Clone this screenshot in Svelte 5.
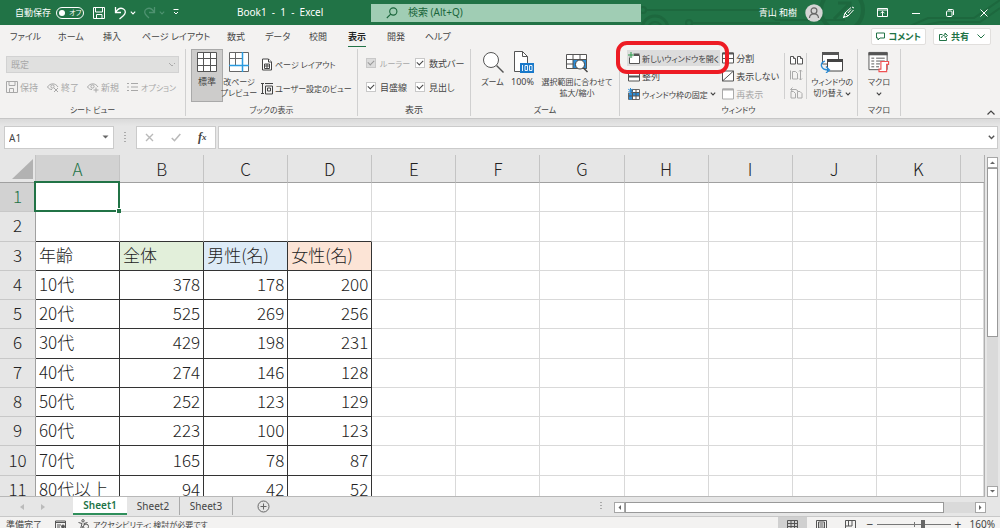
<script>
  const tabs = ['ファイル', 'ホーム', '挿入', 'ページ レイアウト', '数式', 'データ', '校閲', '表示', '開発', 'ヘルプ'];
  const columns = ['A', 'B', 'C', 'D', 'E', 'F', 'G', 'H', 'I', 'J', 'K', ''];
  const rows = [
    [], [],
    ['年齢', '全体', '男性(名)', '女性(名)'],
    ['10代', 378, 178, 200],
    ['20代', 525, 269, 256],
    ['30代', 429, 198, 231],
    ['40代', 274, 146, 128],
    ['50代', 252, 123, 129],
    ['60代', 223, 100, 123],
    ['70代', 165, 78, 87],
    ['80代以上', 94, 42, 52]
  ];
  const tints = ['', 'green', 'blue', 'orange'];
  const sheets = ['Sheet1', 'Sheet2', 'Sheet3'];
  let autosave = $state(false);
  let zoom = $state(160);
</script>

{#snippet chevron()}
  <svg class="chev" width="6" height="4" viewBox="0 0 6 4"><path d="M.8.6 3 2.9 5.2.6" fill="none" stroke="currentColor" stroke-width="1.1" /></svg>
{/snippet}

{#snippet triangle(d)}
  <svg width="9" height="9" viewBox="0 0 9 9"><path {d} fill="#666" /></svg>
{/snippet}

<div class="app">
  <header class="title">
    <svg class="circuit" width="390" height="25" viewBox="0 0 390 25" fill="none" stroke="#1d683e" stroke-width="2">
      <circle cx="33" cy="10" r="3" /><path d="M36 10H150L166 20H235" />
      <circle cx="45" cy="29" r="13" stroke-width="3" /><circle cx="45" cy="29" r="7" />
      <circle cx="79" cy="23" r="3" /><path d="M82 23H170" />
      <circle cx="232" cy="10" r="21" stroke-width="4" /><path d="M224 19 240 3M228 3h12v12" stroke-width="3" />
      <path d="M300 26 318 18H364L390 0M310 26 330 22H370L390 8" />
    </svg>
    <label class="autosave">自動保存 <input type="checkbox" role="switch" bind:checked={autosave} /><span class="toggle"><i></i>オフ</span></label>
    <div class="quick">
      <button aria-label="上書き保存"><svg width="14" height="14" viewBox="0 0 14 14" fill="none" stroke="#fff"><path d="M1.5 1.5h11v11h-11zM3.5 1.5v4.500h7v-4.500M4.500 12.500v-4h5.500v4" /></svg></button>
      <button aria-label="元に戻す"><svg width="13" height="14" viewBox="0 0 13 14" fill="none" stroke="#fff" stroke-width="1.300"><path d="M1.500 1v5.500H7M1.700 6.200C4 2.500 7 1.500 9.500 3c3 2 1.800 5-.2 6.700L5.500 13" /></svg>{@render chevron()}</button>
      <button class="dim" aria-label="やり直し"><svg width="13" height="14" viewBox="0 0 13 14" fill="none" stroke="currentColor" stroke-width="1.300"><path d="M11.500 1v5.500H6M11.300 6.200C9 2.500 6 1.500 3.500 3c-3 2-1.800 5 .2 6.700L6 12" /></svg>{@render chevron()}</button>
      <button aria-label="クイック アクセス"><svg width="6" height="7" viewBox="0 0 6 7" fill="none" stroke="#fff"><path d="M.5.5h5M1 3l2 2 2-2" /></svg></button>
    </div>
    <h1>Book1&nbsp; -&nbsp; 1&nbsp; -&nbsp; Excel</h1>
    <label class="search">
      <svg width="12" height="12" viewBox="0 0 12 12" fill="none" stroke="#19653b" stroke-width="1.100"><circle cx="7.300" cy="4.500" r="3.600" /><path d="M4.700 7.200.8 11" /></svg>
      <input aria-label="検索" placeholder="検索 (Alt+Q)" />
    </label>
    <div class="account">
      <span>青山 和樹</span>
      <svg width="18" height="18" viewBox="0 0 18 18"><circle cx="9" cy="9" r="8.700" fill="#d5d5d5" /><g fill="none" stroke="#666" stroke-width="1.200"><circle cx="9" cy="6.700" r="2.900" /><path d="M4.500 14c.2-5.500 8.800-5.500 9 0" /></g></svg>
    </div>
    <div class="window">
      <button aria-label="ペン"><svg width="13" height="13" viewBox="0 0 13 13" fill="none" stroke="#fff"><path d="M9 1.500 3 7l-1.500 4.500L6 10l5.500-6M3 7l3 3M9 3.500 6 7M1 12l2-2M10 1l2 1" /></svg></button>
      <button aria-label="リボンの表示オプション"><svg width="11" height="9" viewBox="0 0 11 9" fill="none" stroke="#fff"><path d="M.5.5h10v8H.5zM.5 2h10M5.500 8V3.500M3.500 5.300l2-2 2 2" /></svg></button>
      <button aria-label="最小化"><svg width="8" height="8" viewBox="0 0 8 8"><path d="M0 4.500h8" stroke="#fff" /></svg></button>
      <button aria-label="元のサイズに戻す"><svg width="8" height="8" viewBox="0 0 8 8" fill="none" stroke="#fff"><rect x=".5" y="2" width="5.500" height="5.500" rx="1" /><path d="M2 .5h4.500q1 0 1 1V6" /></svg></button>
      <button aria-label="閉じる"><svg width="8" height="8" viewBox="0 0 8 8"><path d="m.5.5 7 7M7.500.5l-7 7" stroke="#fff" /></svg></button>
    </div>
  </header>

  <nav class="menu">
    {#each tabs as tab}
      <button class:active={tab === '表示'}><span>{tab}</span></button>
    {/each}
    <div class="share">
      <button><svg width="9" height="9" viewBox="0 0 9 9" fill="none" stroke="#217346"><path d="M.5 1h8v5H4L2 8V6H.5z" /></svg>コメント</button>
      <button><svg width="9" height="9" viewBox="0 0 9 9" fill="none" stroke="#217346"><path d="M3.500 2.500h-3v6h7V6M2.500 6c.3-2 2-3 3.500-3V1l2.500 2.500L6 5.500V4" /></svg>共有 <svg class="wide" width="8" height="5" viewBox="0 0 8 5" fill="none" stroke="#217346"><path d="m.5.500 3.500 3.500 3.500-3.500" /></svg></button>
    </div>
  </nav>

  <section class="ribbon">
    <div class="group sheetview">
      <div class="body">
        <select aria-label="シート ビュー" disabled><option>既定</option></select>
        <div class="line">
          <button disabled><svg width="12" height="12" viewBox="0 0 12 12" fill="none" stroke="currentColor"><path d="M.5.500h11v11H.5zM3 .5v4h6v-4M3.500 11V7.500h4V11" /></svg>保持</button>
          <button disabled><svg width="12" height="11" viewBox="0 0 12 11" fill="none" stroke="currentColor"><path d="M.5 5C3 .8 8.500.8 11 5M.5 5c1 1.500 2.500 2.500 4.500 2.500" /><circle cx="5.500" cy="4.500" r="1.600" /><path d="m7 6 4 4M11 6l-4 4" /></svg>終了</button>
          <button disabled><svg width="12" height="11" viewBox="0 0 12 11" fill="none" stroke="currentColor"><path d="M.5 5C3 .8 8.500.8 11 5M.5 5c1 1.500 2.500 2.500 4.500 2.500" /><circle cx="5.500" cy="4.500" r="1.600" /><path d="M9 5.500v5M6.500 8h5" /></svg>新規</button>
          <button disabled><svg width="12" height="10" viewBox="0 0 12 10" fill="none" stroke="currentColor"><path d="M0 1.500h2M0 5h2M0 8.500h2M4 1.500h7M4 5h7M4 8.500h7" /></svg><span class="kana">オプション</span></button>
        </div>
      </div>
      <h2 class="kana">シート ビュー</h2>
    </div>

    <div class="group book">
      <div class="body">
        <button class="big pressed"><svg width="22" height="22" viewBox="0 0 22 22"><path d="M1.500 1.500h19v19h-19z" fill="#fff" /><path d="M1.500 1.500h19v19h-19zM7.500 1.500v19M14.500 1.500v19M1.500 7.500h19M1.500 14.500h19" fill="none" stroke="#555" /></svg><span>標準</span></button>
        <button class="big"><svg width="22" height="22" viewBox="0 0 22 22"><path d="M1.500 1.500h19v19h-19z" fill="#fff" /><path d="M7.500 1v13M1 7.500h13" stroke="#666" /><path d="M1.500 1.500h19v19h-19z" fill="none" stroke="#666" /><path d="M14.500 1v20M1 14.500h20" stroke="#2a9be0" stroke-width="1.500" /></svg><span class="kana">改ページ<br />プレビュー</span></button>
        <div class="stack two">
          <button><svg width="12" height="13" viewBox="0 0 12 13" fill="#fff" stroke="#444"><path d="M1.500 1h6l3 3v8h-9z" /><path d="M7.500 1v3h3M3.500 6h5v4.500h-5zM6 6v4.500M3.500 8h5" /></svg><span class="kana">ページ レイアウト</span></button>
          <button><svg width="12" height="13" viewBox="0 0 12 13" fill="none" stroke="#444"><path d="M0 1.500h3M0 11.500h3M1.500 1.500v10M4.500 4h7v8h-7zM4 1.500h8M6.500 6h3v3h-3z" /></svg><span class="kana">ユーザー設定のビュー</span></button>
        </div>
      </div>
      <h2 class="kana">ブックの表示</h2>
    </div>

    <div class="group show">
      <div class="body checks">
        <label class="off"><input type="checkbox" checked disabled /><span class="kana">ルーラー</span></label>
        <label><input type="checkbox" checked />数式バー</label>
        <label><input type="checkbox" checked />目盛線</label>
        <label><input type="checkbox" checked />見出し</label>
      </div>
      <h2>表示</h2>
    </div>

    <div class="group zoom">
      <div class="body">
        <button class="big"><svg width="22" height="22" viewBox="0 0 22 22"><circle cx="9" cy="9" r="7.500" fill="#fff" stroke="#555" /><path d="m14.500 14.500 7 7" stroke="#555" stroke-width="1.400" /></svg><span class="kana">ズーム</span></button>
        <button class="big"><svg width="22" height="22" viewBox="0 0 22 22"><path d="M2.500.500h8l5 5v15h-13z" fill="#fff" stroke="#555" /><path d="M10.500.500v5h5" fill="none" stroke="#555" /><path d="M8 12h14v10H8z" fill="#1979ca" /><path d="M10.500 14v6M13 14.500h2.500v5H13zM17.500 14.500H20v5h-2.500z" fill="none" stroke="#fff" stroke-width=".9" /></svg><span>100%</span></button>
        <button class="big"><svg width="24" height="22" viewBox="0 0 24 22"><path d="M1.500 3.500h20v14h-20z" fill="#fff" /><path d="M8 9h14v9H8z" fill="#2a8dd8" /><path d="M1.500 3.500h20v14h-20zM8 3.500v14M15 3.500v5M1.500 8.500h20M1.500 13h7" fill="none" stroke="#555" /><circle cx="15" cy="13.500" r="4.500" fill="#fff" stroke="#444" /><path d="m18.500 17 4 4" stroke="#444" stroke-width="1.400" /></svg><span class="kana">選択範囲に合わせて<br />拡大/縮小</span></button>
      </div>
      <h2 class="kana">ズーム</h2>
    </div>

    <div class="group win">
      <div class="body">
        <div class="stack">
          <div class="marked">
            <button class="hot"><svg width="12" height="12" viewBox="0 0 12 12"><path d="M1.500 3.500h10v8h-10z" fill="#fff" stroke="#555" /><path d="M5 2.500h6.500" stroke="#555" stroke-width="2" /><path d="M3 0v6M0 3h6" stroke="#dcdcdc" stroke-width="3" /><path d="M3 0v6M0 3h6" stroke="#2a9a4a" /></svg><span class="kana">新しいウィンドウを開く</span></button>
            <i class="ring"></i>
          </div>
          <button><svg width="12" height="12" viewBox="0 0 12 12" fill="#fff" stroke="#555"><path d="M.5 1h11v10H.5z" /><path d="M.5 1.500h11M.5 6.500h11" stroke-width="2" /></svg>整列</button>
          <button><svg width="12" height="12" viewBox="0 0 12 12"><path d="M3.500 1.500h8v10H.5V5h3z" fill="#fff" stroke="#666" /><path d="M4 5h4v3H4zM1 5h3v6.500H1zM8 5h3v3H8z" fill="#2a8dd8" /><path d="M4.500 1.500v10M8 1.500v10M.5 8h11M4 4.500h7.500" stroke="#555" /><path d="M2.500 0v5M.200 1.200 4.800 4M4.800 1.200.2 4" stroke="#2a8dd8" /></svg><span class="kana">ウィンドウ枠の固定</span>{@render chevron()}</button>
        </div>
        <div class="stack side">
          <button><svg width="12" height="12" viewBox="0 0 12 12" fill="#fff" stroke="#555"><path d="M.5 1h11v10H.5zM.5 6.500h11M6 1v10" /><path d="M.5 1.500h11" stroke-width="2" /></svg>分割</button>
          <button><svg width="12" height="12" viewBox="0 0 12 12" fill="#fff" stroke="#555"><path d="M.5 1h11v10H.5zM.5 11l11-10" /></svg>表示しない</button>
          <button disabled><svg width="12" height="12" viewBox="0 0 12 12" fill="#fff" stroke="#aaa"><path d="M.5 1h11v10H.5z" /><path d="M.5 1.500h11" stroke-width="2" /></svg>再表示</button>
        </div>
        <div class="stack pair">
          <button aria-label="並べて比較"><svg width="13" height="12" viewBox="0 0 13 12" fill="#fff" stroke="#555"><path d="M.5 2.500h3l2 2V10h-5zM7.500 2.500h3l2 2V10h-5z" /><path d="M3.500 2.500v2h2M10.500 2.500v2h2" /></svg></button>
          <button disabled aria-label="同時にスクロール"><svg width="13" height="12" viewBox="0 0 13 12" fill="none" stroke="#aaa"><path d="M.5 1.500v9M2.500 2.500h3l2 2V10h-5zM10.500 1v10M9 2.500 10.500 1 12 2.500M9 9.500l1.500 1.500L12 9.500" /></svg></button>
          <button disabled aria-label="ウィンドウの位置を元に戻す"><svg width="13" height="12" viewBox="0 0 13 12" fill="none" stroke="#aaa"><path d="M1 4.500h2.500l2 2V11H1zM7.500 4.500H10l2 2V11H7.500zM1 2.500h5l2 1.500M2.500.500l-2 2 2 1.500" /></svg></button>
        </div>
        <button class="big switch"><svg width="24" height="22" viewBox="0 0 24 22"><path d="M2.500 2h16v11h-16z" fill="#fff" stroke="#555" /><path d="M2 2.500h17" stroke="#555" stroke-width="3" /><path d="M7.500 9h15v11h-15z" fill="#fff" stroke="#444" /><path d="M7 9.500h16" stroke="#444" stroke-width="3" /><path d="M5 10C-.5 12 0 19 9 19M6 15.500 9.500 19 6 22" fill="none" stroke="#2a8dd8" stroke-width="1.300" /></svg><span class="kana">ウィンドウの<br />切り替え {@render chevron()}</span></button>
      </div>
      <h2 class="kana">ウィンドウ</h2>
    </div>

    <div class="group macro">
      <div class="body">
        <button class="big"><svg width="24" height="22" viewBox="0 0 24 23"><path d="M1.500 1.500h19v18h-19z" fill="#fff" stroke="#555" /><path d="M1 3h20" stroke="#555" stroke-width="3" /><path d="M4 7.500h3M9 7.500h9M4 10.500h3M9 10.500h9M4 13.500h3M9 13.500h4M4 16.500h3M9 16.500h3" stroke="#555" /><path d="M14 11h8v3h-2v7.500h-8V19h2z" fill="#fff" stroke="#ee5253" stroke-width="1.200" /></svg><span class="kana">マクロ<br />{@render chevron()}</span></button>
      </div>
      <h2 class="kana">マクロ</h2>
    </div>
    <button class="collapse" aria-label="リボンを折りたたむ"><svg width="8" height="5" viewBox="0 0 8 5"><path d="m.5 4.500 3.500-3.500 3.500 3.500" fill="none" stroke="#444" stroke-width="1.200" /></svg></button>
  </section>

  <section class="formula">
    <div class="name"><input aria-label="名前ボックス" value="A1" /><svg width="7" height="4" viewBox="0 0 7 4"><path d="M.5.500h6l-3 3z" fill="#666" /></svg></div>
    <i class="grip"></i>
    <div class="fx">
      <button aria-label="キャンセル"><svg width="9" height="9" viewBox="0 0 9 9"><path d="m1 1 7 7M8 1 1 8" stroke="#b9b9b9" stroke-width="1.400" /></svg></button>
      <button aria-label="入力"><svg width="10" height="9" viewBox="0 0 10 9"><path d="M.8 5 3.500 7.700 9.300 1" fill="none" stroke="#b9b9b9" stroke-width="1.600" /></svg></button>
      <button class="fn">f<small>x</small></button>
    </div>
    <div class="entry"><input aria-label="数式バー" /><svg width="7" height="5" viewBox="0 0 7 5"><path d="m.8.800 2.700 2.700L6.200.8" fill="none" stroke="#555" stroke-width="1.400" /></svg></div>
  </section>

  <main class="work">
    <div class="sheet">
      <table>
        <colgroup>
          <col class="numcol" />
          {#each columns as c}<col class:last={!c} />{/each}
        </colgroup>
        <thead>
          <tr><th class="corner"><svg width="22" height="22" viewBox="0 0 22 22"><path d="M21 1v20H0z" fill="#b2b2b2" /></svg></th>{#each columns as c}<th class:sel={c === 'A'}>{c}</th>{/each}</tr>
        </thead>
        <tbody>
          {#each rows as row, r}
            <tr>
              <th class:sel={r === 0}>{r + 1}</th>
              {#each columns as c, i}
                <td class={[r > 1 && i < 4 && 'box', r === 1 && i < 4 && 'above', r === 2 && tints[i], r > 2 && i > 0 && 'num', r === 0 && i === 0 && 'cursor']}>{row[i] ?? ''}</td>
              {/each}
            </tr>
          {/each}
        </tbody>
      </table>
    </div>
    <div class="vbar">
      <button aria-label="上へ">{@render triangle('M2 6h5L4.500 3.500z')}</button>
      <div class="track"><div class="thumb"></div></div>
      <button aria-label="下へ">{@render triangle('M2 3h5L4.500 5.500z')}</button>
    </div>
  </main>

  <footer class="sheets">
    <div class="arrows"><svg width="4" height="6" viewBox="0 0 4 6"><path d="M4 0v6L0 3z" fill="#bbb" /></svg><svg width="4" height="6" viewBox="0 0 4 6"><path d="M0 0v6l4-3z" fill="#bbb" /></svg></div>
    {#each sheets as s, i}
      <button class="tab" class:active={i === 0}>{s}</button>
    {/each}
    <button class="add" aria-label="新しいシート"><svg width="13" height="13" viewBox="0 0 13 13" fill="none" stroke="#666"><circle cx="6.500" cy="6.500" r="5.500" /><path d="M6.500 3.500v6M3.500 6.500h6" /></svg></button>
    <i class="grip"></i>
    <div class="hbar">
      <button aria-label="左へ">{@render triangle('M6 2v5L3.500 4.500z')}</button>
      <div class="track"><div class="thumb"></div></div>
      <button aria-label="右へ">{@render triangle('M3 2v5l2.500-2.500z')}</button>
    </div>
  </footer>

  <footer class="status">
    <span class="ready">準備完了</span>
    <svg width="11" height="10" viewBox="0 0 11 10" fill="none" stroke="#555"><path d="M.5 1h10v8H.5zM.5 2.500h10M2 5h4M2 7h3" /><circle cx="8" cy="6.500" r="1.500" fill="#555" /></svg>
    <svg class="acc" width="11" height="11" viewBox="0 0 11 11" fill="none" stroke="#555"><circle cx="5" cy="1.800" r="1.200" /><path d="M.5 3.500 4 4.500 2.500 10M9.500 3.500 6 4.500v1M3.500 10 5 7" /><circle cx="8" cy="7.500" r="2.500" /></svg>
    <span class="kana">アクセシビリティ: 検討が必要です</span>
    <div class="views">
      <button class="on" aria-label="標準"><svg width="11" height="10" viewBox="0 0 11 10" fill="none" stroke="#555"><path d="M.5.500h10v9H.5zM4 0v10M7.500 0v10M0 3.500h11M0 6.500h11" /></svg></button>
      <button aria-label="ページ レイアウト"><svg width="11" height="10" viewBox="0 0 11 10" fill="none" stroke="#555"><path d="M.5.500h10v9H.5zM2.500 2h6v6h-6zM3.500 4h4M3.500 6h4" /></svg></button>
      <button aria-label="改ページ プレビュー"><svg width="11" height="10" viewBox="0 0 11 10" fill="none" stroke="#555"><path d="M.5.500h10v9H.5zM3.500 0v6M7 0v6M.5 6H7" /></svg></button>
    </div>
    <button class="pm" aria-label="縮小">−</button>
    <input class="slider" type="range" aria-label="ズーム" min="10" max="247" bind:value={zoom} />
    <button class="pm" aria-label="拡大">+</button>
    <span class="pct">{zoom}%</span>
  </footer>
</div>

<style>
  :global(body) { overflow: hidden; }
  .app { display: flex; flex-direction: column; height: calc(100vh + 4px); background: #e6e6e6; color: #444; font: 9px/11px "Noto Sans", "Noto Sans CJK JP", sans-serif; font-feature-settings: "palt"; white-space: nowrap; }
  .app * { box-sizing: border-box; }
  button, input, select { margin: 0; padding: 0; border: 0; background: none; color: inherit; font: inherit; font-feature-settings: inherit; outline: 0; }
  button { display: inline-flex; align-items: center; justify-content: center; }
  svg { flex: none; display: block; }
  h1, h2 { margin: 0; font-weight: 400; }

  .title { position: relative; flex: none; height: 25px; display: flex; align-items: center; background: #217346; color: #fff; padding-left: 15px; }
  .title > :not(.circuit) { position: relative; }
  .circuit { position: absolute; right: 0; top: 0; }
  .autosave { display: flex; align-items: center; gap: 5px; width: 77px; }
  .autosave input { position: absolute; opacity: 0; }
  .toggle { display: flex; align-items: center; gap: 4px; width: 28px; height: 12px; padding-left: 2px; border: 1px solid #fff; border-radius: 6px; font-size: 7px; }
  .toggle i { width: 6px; height: 6px; border-radius: 50%; background: #fff; }
  .quick { display: grid; grid-template-columns: 22px 29px 30px 12px; align-items: center; justify-items: start; width: 145px; }
  .quick button { gap: 3px; }
  .quick .dim { color: #4e9270; }
  h1 { width: 134px; font-size: 10px; }
  .search { display: flex; align-items: center; gap: 10px; width: 270px; height: 18px; padding-left: 15px; background: #a0cdb4; color: #19653b; font-size: 10px; }
  .search input { flex: 1; min-width: 0; }
  .search input::placeholder { color: #19653b; opacity: 1; }
  .account { display: flex; align-items: center; gap: 8px; margin-left: auto; }
  .window { display: grid; grid-template-columns: repeat(5, 34px); margin: 0 -1px 0 8px; }

  .menu { flex: none; height: 22px; display: grid; grid-template-columns: 48px 45px 39px 85px 38px 44px 39px 39px 38px 44px 1fr; align-items: stretch; background: #f3f2f1; padding: 0 9px 0 10px; }
  .menu > button { justify-content: flex-start; }
  .menu > button span { padding: 4px 0; border-bottom: 2px solid transparent; border-top: 2px solid transparent; }
  .menu > button.active span { border-bottom-color: #217346; color: #222; font-weight: 700; }
  .share { display: flex; justify-content: flex-end; gap: 7px; padding: 3px 0; }
  .share button { gap: 3px; padding: 0 5px; background: #fff; border: 1px solid #e1dfdd; border-radius: 2px; color: #217346; font-weight: 700; }
  .share button:first-child { padding: 0 4px; }
  .wide { margin-left: 5px; }

  .ribbon { flex: none; height: 72px; display: grid; grid-template-columns: 186px 172px 113px 149px 238px 43px 1fr; background: #f3f2f1; border-bottom: 1px solid #c6c6c6; padding-top: 2px; }
  .group { display: flex; flex-direction: column; align-items: stretch; border-right: 1px solid #d0d0d0; margin-bottom: 2px; }
  .group .body { flex: 1; display: flex; }
  .group h2 { text-align: center; line-height: 13px; font-size: 9px; }
  .group button { gap: 2px; }
  .group button:disabled { color: #a8a8a8; }
  .kana, .group h2.kana { font-size: 8px; }
  .big { flex-direction: column; justify-content: flex-start; padding-top: 2px; }
  .group .big { gap: 3px; }
  .big span { min-height: 22px; text-align: center; }
  .chev { display: inline-block; vertical-align: middle; }
  .sheetview .body { flex-direction: column; padding: 7px 6px 0; }
  .sheetview select { height: 17px; padding: 0 4px; border: 1px solid #d2d2d2; background: #e0e0df; color: #a8a8a8; opacity: 1; appearance: none; background-image: linear-gradient(45deg, transparent 50%, #aaa 50%, #aaa 65%, transparent 65%), linear-gradient(-45deg, transparent 50%, #aaa 50%, #aaa 65%, transparent 65%); background-size: 3px 3px; background-repeat: no-repeat; background-position: right 6px center, right 3px center; }
  .line { display: grid; grid-template-columns: 41px 40px 40px auto; justify-content: start; justify-items: start; padding-top: 8px; }
  .book .body { padding-left: 5px; }
  .book .big { width: 32px; }
  .pressed { height: 53px; background: #cdcccb; border: 1px solid #a9a9a9; padding-top: 1px; }
  .stack { display: grid; grid-template-rows: repeat(3, 18px); align-items: center; justify-items: start; align-content: start; }
  .two { grid-template-rows: 24px 24px; padding: 3px 0 0 6px; }
  .show .body { display: grid; grid-template-columns: 49px auto; grid-template-rows: 24px 24px; justify-content: start; align-items: center; padding: 2px 0 0 8px; }
  .checks label { display: flex; align-items: center; gap: 4px; }
  .checks .off { color: #a8a8a8; }
  .checks input { appearance: none; display: grid; place-items: center; width: 10px; height: 10px; border: 1px solid #c8c8c8; background: #fff; }
  .checks .off input { background: #dcdcdc; }
  .checks input:checked::after { content: ""; width: 5px; height: 3px; border: solid #444; border-width: 0 0 1px 1px; transform: rotate(-45deg); margin-bottom: 2px; }
  .checks .off input:checked::after { border-color: #999; }
  .zoom .body { display: grid; grid-template-columns: 25px 35px 74px; padding-left: 9px; }
  .win .body { padding-left: 7px; }
  .marked { position: relative; }
  .win .hot { height: 16px; width: 93px; justify-content: flex-start; background: #dcdcdc; padding: 0 2px 0 1px; }
  .win .stack > button { padding-left: 1px; }
  .ring { position: absolute; z-index: 2; inset: -9px -9px -8px -11px; border: 4px solid #ed1c24; border-radius: 11px; pointer-events: none; }
  .side { width: 68px; padding-left: 1px; }
  .pair { width: 24px; height: 46px; margin: 4px 0 0 -4px; border: solid #d0d0d0; border-width: 0 1px; padding-left: 4px; }
  .win .pair { grid-template-rows: 13px 18px 17px; }
  .switch { width: 50px; }
  .win .body > .stack:first-child { width: 94px; }
  .macro .big { width: 100%; }
  .collapse { align-self: end; justify-self: end; padding: 0 5px 3px 0; }

  .formula { flex: none; height: 36px; display: flex; align-items: center; padding: 0 2px 0 4px; background: linear-gradient(#dadada, #e6e6e6 7px); }
  .name, .fx, .entry { height: 23px; display: flex; align-items: center; background: #fff; border: 1px solid #cbcbcb; }
  .name { width: 110px; padding: 0 4px; font-size: 10px; }
  .name input { flex: 1; min-width: 0; padding: 3px 0 0; }
  .grip { width: 2px; height: 10px; margin: 0 10px; background: repeating-linear-gradient(#aaa 0 1px, transparent 1px 3px); }
  .fx { width: 80px; justify-content: space-around; margin-right: 2px; }
  .fn { font: italic 700 12px/12px "Liberation Serif", serif; }
  .fn small { font-size: 9px; }
  .entry { flex: 1; padding-right: 2px; }
  .entry input { flex: 1; }

  .work { flex: 1; min-height: 0; display: flex; }
  .sheet { flex: 1; min-width: 0; overflow: hidden; background: #fff; border-right: 1px solid #b0b0b0; border-bottom: 1px solid #b8b8b8; }
  table { width: 100%; height: calc(100% + 9px); table-layout: fixed; border-collapse: separate; border-spacing: 0; font: 17px/20px "Noto Sans CJK JP", sans-serif; font-weight: 300; font-feature-settings: normal; color: #222; }
  .numcol { width: 36px; }
  .last { width: 23px; }
  th, td { padding: 0 0 2px; border: solid #d9d9d9; border-width: 0 1px 1px 0; }
  th { background: #e6e6e6; font-weight: 300; color: #222; }
  thead th { height: 28px; padding: 0; border-bottom-color: #a0a0a0; border-right: 1px solid #c4c4c4; }
  thead th:last-child { border-right: 0; }
  tbody th { border-color: #c8c8c8; border-right-color: #a0a0a0; }
  th.sel { background: #d2d2d2; color: #217346; }
  .corner svg { margin: 1px 1px 0 auto; }
  td { padding: 0 3px 2px; }
  .box { border-color: #333; }
  .above { border-bottom-color: #333; }
  .num { text-align: right; }
  .green { background: #e2efda; }
  .blue { background: #ddebf7; }
  .orange { background: #fce4d6; }
  .cursor { position: relative; }
  .cursor::before { content: ""; position: absolute; inset: -2px -1px -1px -2px; border: 2px solid #217346; }
  .cursor::after { content: ""; position: absolute; right: -2px; bottom: -2px; width: 4px; height: 4px; background: #217346; border: solid #fff; border-width: 1px 0 0 1px; box-sizing: content-box; }

  .vbar { display: flex; flex-direction: column; width: 15px; padding: 2px 2px 0 2px; }
  .vbar button, .hbar button { width: 11px; height: 11px; background: #fff; border: 1px solid #a6a6a6; }
  .track { flex: 1; background: #dadada; }
  .thumb { background: #fff; border: 1px solid #999; }
  .vbar .thumb { height: 53%; }

  .sheets { flex: none; height: 20px; display: flex; align-items: flex-start; border-bottom: 1px solid #c8c8c8; font-size: 10px; padding-right: 14px; }
  .arrows { display: flex; gap: 17px; width: 73px; padding: 7px 0 0 20px; }
  .tab { height: 18px; width: 53px; border-right: 1px solid #aaa; }
  .tab.active { width: 54px; background: #fff; border-right: 0; border-bottom: 2px solid #2f8f5b; color: #217346; font-weight: 600; }
  .add { margin: 3px auto 0 24px; }
  .sheets .grip { margin-top: 5px; margin-right: 12px; height: 8px; }
  .hbar { display: flex; width: 37%; min-width: 372px; margin-top: 5px; }
  .hbar .thumb { width: 91%; height: 11px; }

  .status { flex: none; height: 15px; display: flex; align-items: center; background: #f3f2f1; padding: 0 5px 0 6px; }
  .ready { width: 49px; }
  .acc { margin: 0 4px 0 12px; }
  .views { display: flex; align-self: stretch; margin-left: auto; }
  .views button { width: 29px; }
  .views .on { background: #d0d0d0; }
  .pm { width: 10px; font-size: 12px; }
  .slider { appearance: none; width: 74px; height: 11px; margin: 0 2px; background: linear-gradient(#777, #777) center / 100% 1px no-repeat, linear-gradient(#777, #777) center / 1px 5px no-repeat; }
  .slider::-webkit-slider-thumb { appearance: none; width: 4px; height: 9px; background: #666; }
  .pct { width: 32px; text-align: right; font-size: 10px; }
</style>
